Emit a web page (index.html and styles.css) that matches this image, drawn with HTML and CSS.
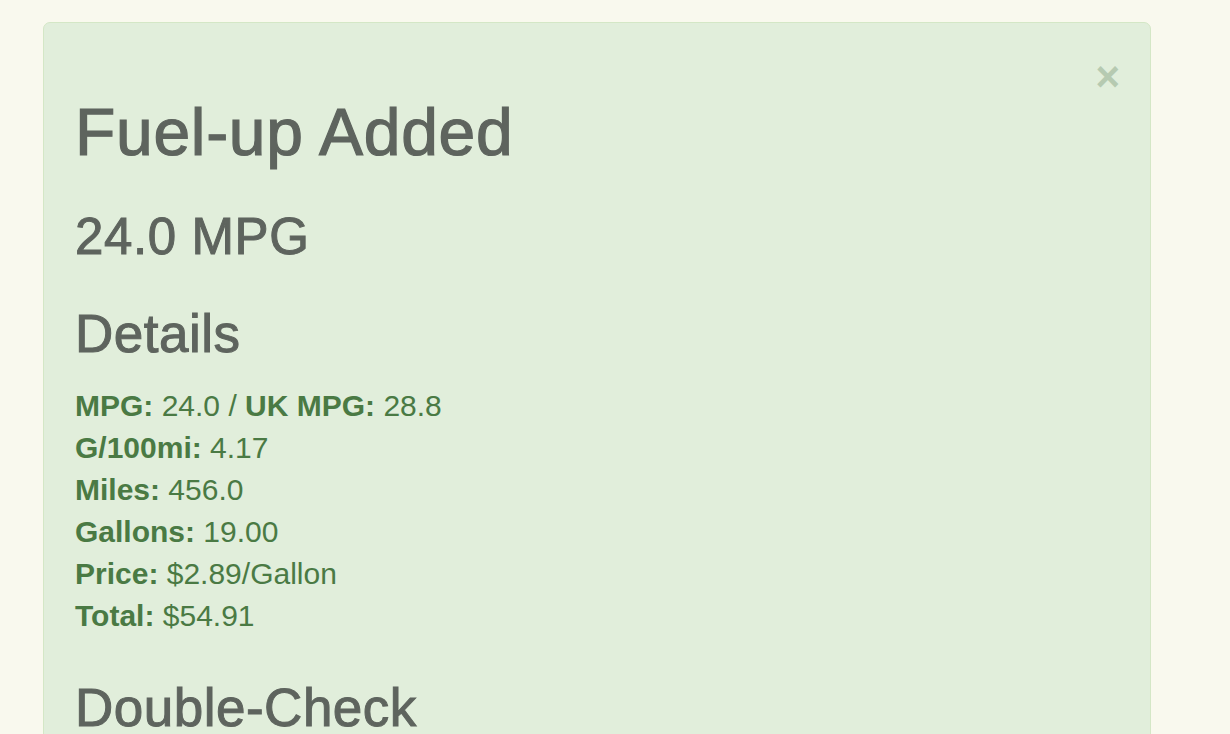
FILE: index.html
```html
<!DOCTYPE html>
<html lang="en">
<head>
  <meta charset="UTF-8">
  <meta name="viewport" content="width=device-width, initial-scale=1.0">
  <title>Fuel-up Added</title>
  <link rel="stylesheet" href="styles.css">
</head>
<body>
  <div class="alert">
    <button class="close" type="button" aria-label="Close">&times;</button>
    <h1>Fuel-up Added</h1>
    <h2>24.0 MPG</h2>

    <h3>Details</h3>
    <ul class="details">
      <li><strong>MPG:</strong> 24.0 / <strong>UK MPG:</strong> 28.8</li>
      <li><strong>G/100mi:</strong> 4.17</li>
      <li><strong>Miles:</strong> 456.0</li>
      <li><strong>Gallons:</strong> 19.00</li>
      <li><strong>Price:</strong> $2.89/Gallon</li>
      <li><strong>Total:</strong> $54.91</li>
    </ul>

    <h3 class="check">Double-Check</h3>
  </div>
</body>
</html>
```

FILE: styles.css
```css
body {
  font-family: "Liberation Sans", Arial, sans-serif;
  background-color: #f9f9ee;
  margin: 0;
  padding: 22px 0 0 43px;
}
.alert {
  position: relative;
  width: 1108px;
  box-sizing: border-box;
  min-height: 760px;
  background-color: #e1eedb;
  border: 1px solid #d4e7c6;
  border-radius: 7px;
  padding: 32px 31px;
  color: #4a7a44;
}
.close {
  position: absolute;
  top: 24px;
  right: 30px;
  padding: 0;
  border: 0;
  background: none;
  font-family: "Liberation Sans", Arial, sans-serif;
  font-size: 42px;
  font-weight: bold;
  line-height: 60px;
  color: #b6cab1;
  cursor: pointer;
}
/* medium weight: regular face thickened a little */
h1, h2, h3 {
  color: #5e645e;
  font-weight: normal;
  -webkit-text-stroke: 1px #5e645e;
  letter-spacing: 0.6px;
  margin: 0;
}
h1 {
  font-size: 66px;
  line-height: 72px;
  margin-top: 41px;
  letter-spacing: 0.7px;
  -webkit-text-stroke-width: 1.2px;
}
h2 {
  font-size: 51px;
  line-height: 58px;
  margin-top: 40px;
}
h3 {
  font-size: 53px;
  line-height: 58px;
  margin-top: 39px;
  letter-spacing: 0.5px;
}
.details {
  list-style: none;
  margin: 22px 0 0;
  padding: 0;
  font-size: 30px;
  line-height: 42px;
}
.details strong {
  font-weight: bold;
}
.check {
  margin-top: 42px;
}
```
